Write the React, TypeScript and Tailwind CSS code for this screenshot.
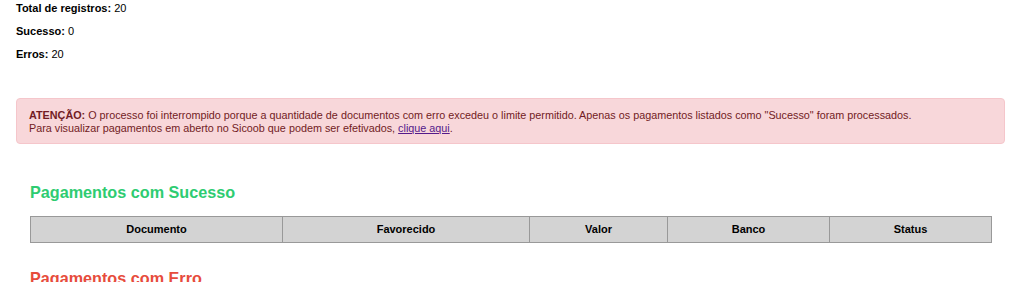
export default function App() {
  const cols = [
    { label: "Documento", w: "w-[252px]" },
    { label: "Favorecido", w: "w-[247px]" },
    { label: "Valor", w: "w-[138px]" },
    { label: "Banco", w: "w-[162px]" },
    { label: "Status", w: "w-[162px]" },
  ];
  return (
    <div className="h-[282px] overflow-hidden bg-white pl-4 pr-[19px] pt-[2px] font-['Liberation_Sans',Arial,sans-serif] text-[11px] leading-[13px] text-black">
      <div className="flex flex-col gap-[10px]">
        <p>
          <b>Total de registros:</b> 20
        </p>
        <p>
          <b>Sucesso:</b> 0
        </p>
        <p>
          <b>Erros:</b> 20
        </p>
      </div>

      <div className="mt-[37px] h-[46px] rounded-[4px] border border-[#f5c6cb] bg-[#f8d7da] px-3 pt-[10px] text-[10.8px] text-[#721c24]">
        <b>ATENÇÃO:</b> O processo foi interrompido porque a quantidade de documentos com erro excedeu o limite permitido. Apenas os pagamentos listados como "Sucesso" foram processados.
        <br />
        Para visualizar pagamentos em aberto no Sicoob que podem ser efetivados,{" "}
        <a href="#" className="text-[#551a8b] underline">
          clique aqui
        </a>
        .
      </div>

      <div className="px-[14px]">
        <h3 className="mt-[39px] text-[16.2px] leading-[19px] font-bold text-[#2ecc71]">
          Pagamentos com Sucesso
        </h3>
        <table className="mt-[14px] w-[962px] table-fixed border-collapse">
          <thead>
            <tr className="bg-[#d3d3d3]">
              {cols.map((c) => (
                <th
                  key={c.label}
                  className={`${c.w} h-[26px] border border-[#999] p-0 text-center font-bold`}
                >
                  {c.label}
                </th>
              ))}
            </tr>
          </thead>
        </table>
        <h3 className="mt-[26px] text-[16.2px] leading-[19px] font-bold text-[#e74c3c]">
          Pagamentos com Erro
        </h3>
      </div>
    </div>
  );
}
